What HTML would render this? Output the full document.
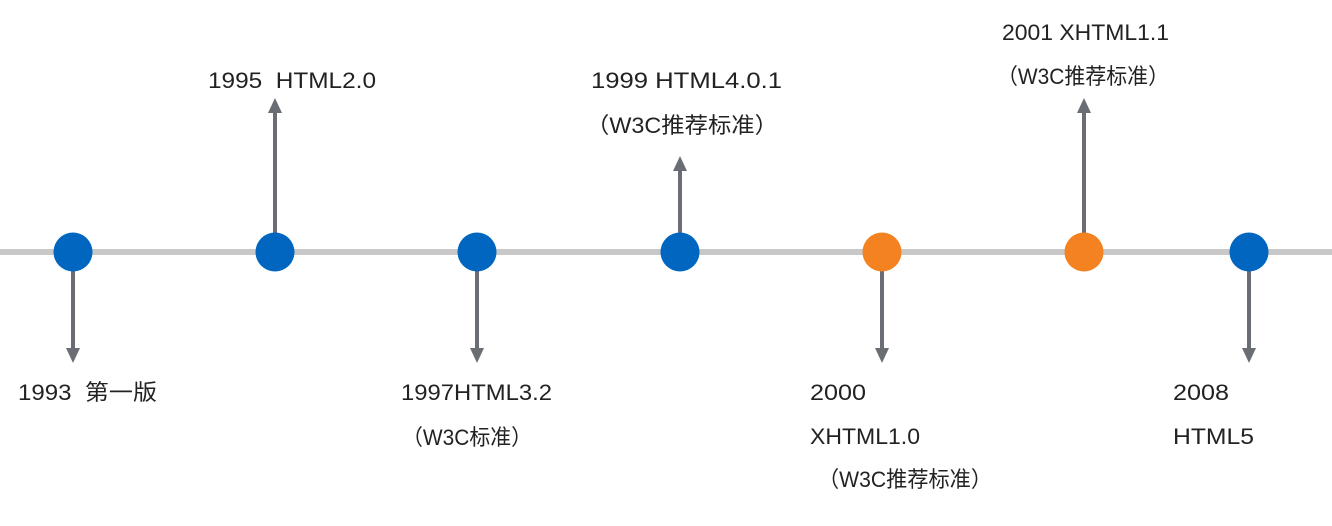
<!DOCTYPE html>
<html><head><meta charset="utf-8"><style>
html,body{margin:0;padding:0;background:#fff;width:1332px;height:526px;overflow:hidden}
text{font-family:"Liberation Sans","Noto Sans CJK SC",sans-serif;font-size:22px;fill:#222}
</style></head><body>
<svg width="1332" height="526" xmlns="http://www.w3.org/2000/svg">
<rect x="0" y="249" width="1332" height="6" fill="#c8c8c8"/>
<g fill="#6b6d75">
<rect x="71" y="252" width="4" height="97"/><polygon points="66,348 80,348 73,363"/>
<rect x="475" y="252" width="4" height="97"/><polygon points="470,348 484,348 477,363"/>
<rect x="880" y="252" width="4" height="97"/><polygon points="875,348 889,348 882,363"/>
<rect x="1247" y="252" width="4" height="97"/><polygon points="1242,348 1256,348 1249,363"/>
<rect x="273" y="112" width="4" height="140"/><polygon points="268,113 282,113 275,98"/>
<rect x="678" y="170" width="4" height="82"/><polygon points="673,171 687,171 680,156"/>
<rect x="1082" y="112" width="4" height="140"/><polygon points="1077,113 1091,113 1084,98"/>
</g>
<g fill="#0066bf">
<circle cx="73" cy="252" r="19.5"/><circle cx="275" cy="252" r="19.5"/><circle cx="477" cy="252" r="19.5"/><circle cx="680" cy="252" r="19.5"/><circle cx="1249" cy="252" r="19.5"/>
</g>
<g fill="#f58220"><circle cx="882" cy="252" r="19.5"/><circle cx="1084" cy="252" r="19.5"/></g>
<text x="208" y="88" xml:space="preserve" textLength="168" lengthAdjust="spacingAndGlyphs">1995  HTML2.0</text>
<text x="591" y="88" textLength="191" lengthAdjust="spacingAndGlyphs">1999 HTML4.0.1</text>
<text x="586" y="133" textLength="192" lengthAdjust="spacingAndGlyphs">（W3C推荐标准）</text>
<text x="1002" y="40" textLength="167" lengthAdjust="spacingAndGlyphs">2001 XHTML1.1</text>
<text x="997" y="84" textLength="172" lengthAdjust="spacingAndGlyphs">（W3C推荐标准）</text>
<text x="18" y="400" xml:space="preserve" textLength="139" lengthAdjust="spacingAndGlyphs">1993  第一版</text>
<text x="401" y="400" textLength="151" lengthAdjust="spacingAndGlyphs">1997HTML3.2</text>
<text x="402" y="445" textLength="130" lengthAdjust="spacingAndGlyphs">（W3C标准）</text>
<text x="810" y="400" textLength="56" lengthAdjust="spacingAndGlyphs">2000</text>
<text x="810" y="444" textLength="110" lengthAdjust="spacingAndGlyphs">XHTML1.0</text>
<text x="818" y="487" textLength="174" lengthAdjust="spacingAndGlyphs">（W3C推荐标准）</text>
<text x="1173" y="400" textLength="56" lengthAdjust="spacingAndGlyphs">2008</text>
<text x="1173" y="444" textLength="81" lengthAdjust="spacingAndGlyphs">HTML5</text>
</svg>
</body></html>
